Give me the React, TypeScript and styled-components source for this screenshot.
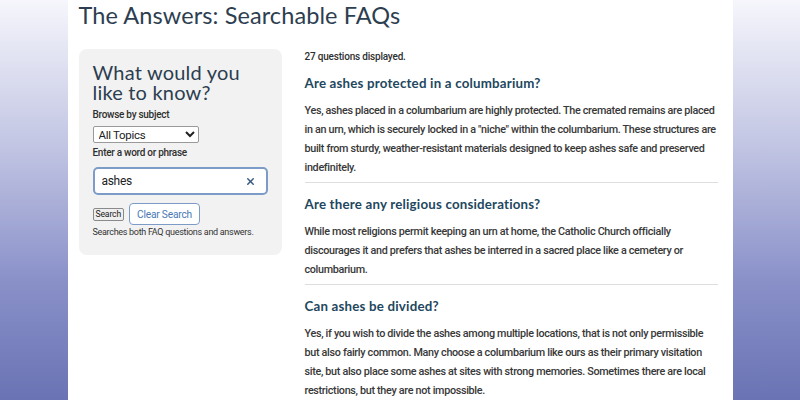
import React, { useState } from 'react'
import styled, { createGlobalStyle } from 'styled-components'
import { X } from 'lucide-react'

const GlobalStyle = createGlobalStyle`
  html, body {
    margin: 0;
    padding: 0;
    height: 100%;
  }
  body {
    background: linear-gradient(to bottom, #f6f6fc 0%, #c4c7e4 35%, #8a91c9 70%, #6a73b4 100%);
    font-family: Roboto, "Liberation Sans", sans-serif;
    overflow: hidden;
  }
`

const Page = styled.div`
  width: 665px;
  height: 400px;
  margin: 0 auto;
  background: #fff;
  padding: 0 15px 0 11px;
  box-sizing: border-box;
  overflow: hidden;
`

const Title = styled.h1`
  margin: 0;
  font-family: Lato, "Open Sans", sans-serif;
  font-weight: 400;
  font-size: 23.5px;
  line-height: 31px;
  color: #2c3e50;
  letter-spacing: 0.1px;
`

const Layout = styled.div`
  display: grid;
  grid-template-columns: 203px 1fr;
  column-gap: 23px;
  margin-top: 18px;
  align-items: start;
`

const Sidebar = styled.aside`
  background: #f2f2f2;
  border-radius: 8px;
  padding: 13px 14px 14px 14px;
  height: 206px;
  box-sizing: border-box;
`

const Ask = styled.h2`
  margin: 0 0 6px;
  font-family: Lato, "Open Sans", sans-serif;
  font-weight: 400;
  font-size: 20px;
  line-height: 20px;
  color: #2c3e50;
  letter-spacing: 0.2px;
`

const Label = styled.label`
  display: block;
  font-size: 10px;
  font-weight: 500;
  letter-spacing: -0.28px;
  color: #2f2f2f;
  line-height: 14px;
`

const Select = styled.select`
  display: block;
  width: 106px;
  height: 17px;
  margin: 4px 0 3px;
  font-family: Roboto, "Liberation Sans", sans-serif;
  font-size: 11.5px;
  letter-spacing: -0.3px;
  color: #222;
  background: #fff;
  border: 1px solid #9a9a9a;
  border-radius: 2px;
  padding: 0 1px;
`

const SearchBox = styled.div`
  display: flex;
  align-items: center;
  height: 28px;
  margin: 7px 0 8px;
  border: 2px solid #7c9cc7;
  border-radius: 5px;
  background: #fff;
  padding: 0 10px 0 7px;
  box-sizing: border-box;
`

const SearchInput = styled.input`
  flex: 1;
  width: 0;
  min-width: 0;
  border: none;
  outline: none;
  font-family: Roboto, "Liberation Sans", sans-serif;
  font-size: 12px;
  letter-spacing: -0.3px;
  color: #222;
  padding: 0;
  background: transparent;
`

const ClearIcon = styled.span`
  display: flex;
  color: #3a5a85;
`

const Buttons = styled.div`
  display: flex;
  align-items: center;
  gap: 5px;
`

const SmallButton = styled.button`
  font-family: Roboto, "Liberation Sans", sans-serif;
  font-size: 8.6px;
  letter-spacing: -0.15px;
  height: 13px;
  line-height: 10px;
  padding: 0 2px;
  color: #222;
  background: #efefef;
  border: 1px solid #8a8a8a;
  border-radius: 2px;
`

const OutlineButton = styled.button`
  font-family: Roboto, "Liberation Sans", sans-serif;
  font-size: 10.2px;
  letter-spacing: -0.2px;
  height: 22px;
  padding: 0 7px;
  color: #4a78b5;
  background: #fff;
  border: 1px solid #7c9cc7;
  border-radius: 4px;
`

const Hint = styled.p`
  margin: 1px 0 0;
  font-size: 9px;
  letter-spacing: -0.3px;
  color: #333;
  line-height: 13px;
  white-space: nowrap;
`

const Results = styled.section`
  padding-top: 1px;
`

const Count = styled.p`
  margin: 0 0 9px;
  font-size: 10px;
  font-weight: 500;
  letter-spacing: -0.2px;
  color: #2f2f2f;
  line-height: 14px;
`

const Faq = styled.article<{ $last?: boolean }>`
  border-bottom: ${(p) => (p.$last ? '1px solid #ececec' : '1px solid #dedede')};
  padding-bottom: 5px;
  margin-bottom: 11px;
`

const Question = styled.h3`
  margin: 0 0 8px;
  font-family: Lato, "Open Sans", sans-serif;
  font-weight: 700;
  font-size: 13.3px;
  line-height: 20px;
  color: #22475e;
  letter-spacing: 0.2px;
`

const Answer = styled.p`
  margin: 0;
  font-size: 10.8px;
  font-weight: 500;
  letter-spacing: -0.32px;
  line-height: 19px;
  color: #383838;
`

const faqs = [
  {
    q: 'Are ashes protected in a columbarium?',
    a: 'Yes, ashes placed in a columbarium are highly protected. The cremated remains are placed in an urn, which is securely locked in a "niche" within the columbarium. These structures are built from sturdy, weather-resistant materials designed to keep ashes safe and preserved indefinitely.',
  },
  {
    q: 'Are there any religious considerations?',
    a: 'While most religions permit keeping an urn at home, the Catholic Church officially discourages it and prefers that ashes be interred in a sacred place like a cemetery or columbarium.',
  },
  {
    q: 'Can ashes be divided?',
    a: 'Yes, if you wish to divide the ashes among multiple locations, that is not only permissible but also fairly common. Many choose a columbarium like ours as their primary visitation site, but also place some ashes at sites with strong memories. Sometimes there are local restrictions, but they are not impossible.',
  },
]

export default function App() {
  const [term, setTerm] = useState('ashes')

  return (
    <>
      <GlobalStyle />
      <Page>
        <Title>The Answers: Searchable FAQs</Title>
        <Layout>
          <Sidebar>
            <Ask>What would you like to know?</Ask>
            <Label>Browse by subject</Label>
            <Select defaultValue="all">
              <option value="all">All Topics</option>
            </Select>
            <Label>Enter a word or phrase</Label>
            <SearchBox>
              <SearchInput value={term} onChange={(e) => setTerm(e.target.value)} />
              <ClearIcon>
                <X size={11} strokeWidth={3.2} />
              </ClearIcon>
            </SearchBox>
            <Buttons>
              <SmallButton>Search</SmallButton>
              <OutlineButton onClick={() => setTerm('')}>Clear Search</OutlineButton>
            </Buttons>
            <Hint>Searches both FAQ questions and answers.</Hint>
          </Sidebar>
          <Results>
            <Count>27 questions displayed.</Count>
            {faqs.map((f, i) => (
              <Faq key={f.q} $last={i === faqs.length - 1}>
                <Question>{f.q}</Question>
                <Answer>{f.a}</Answer>
              </Faq>
            ))}
          </Results>
        </Layout>
      </Page>
    </>
  )
}
